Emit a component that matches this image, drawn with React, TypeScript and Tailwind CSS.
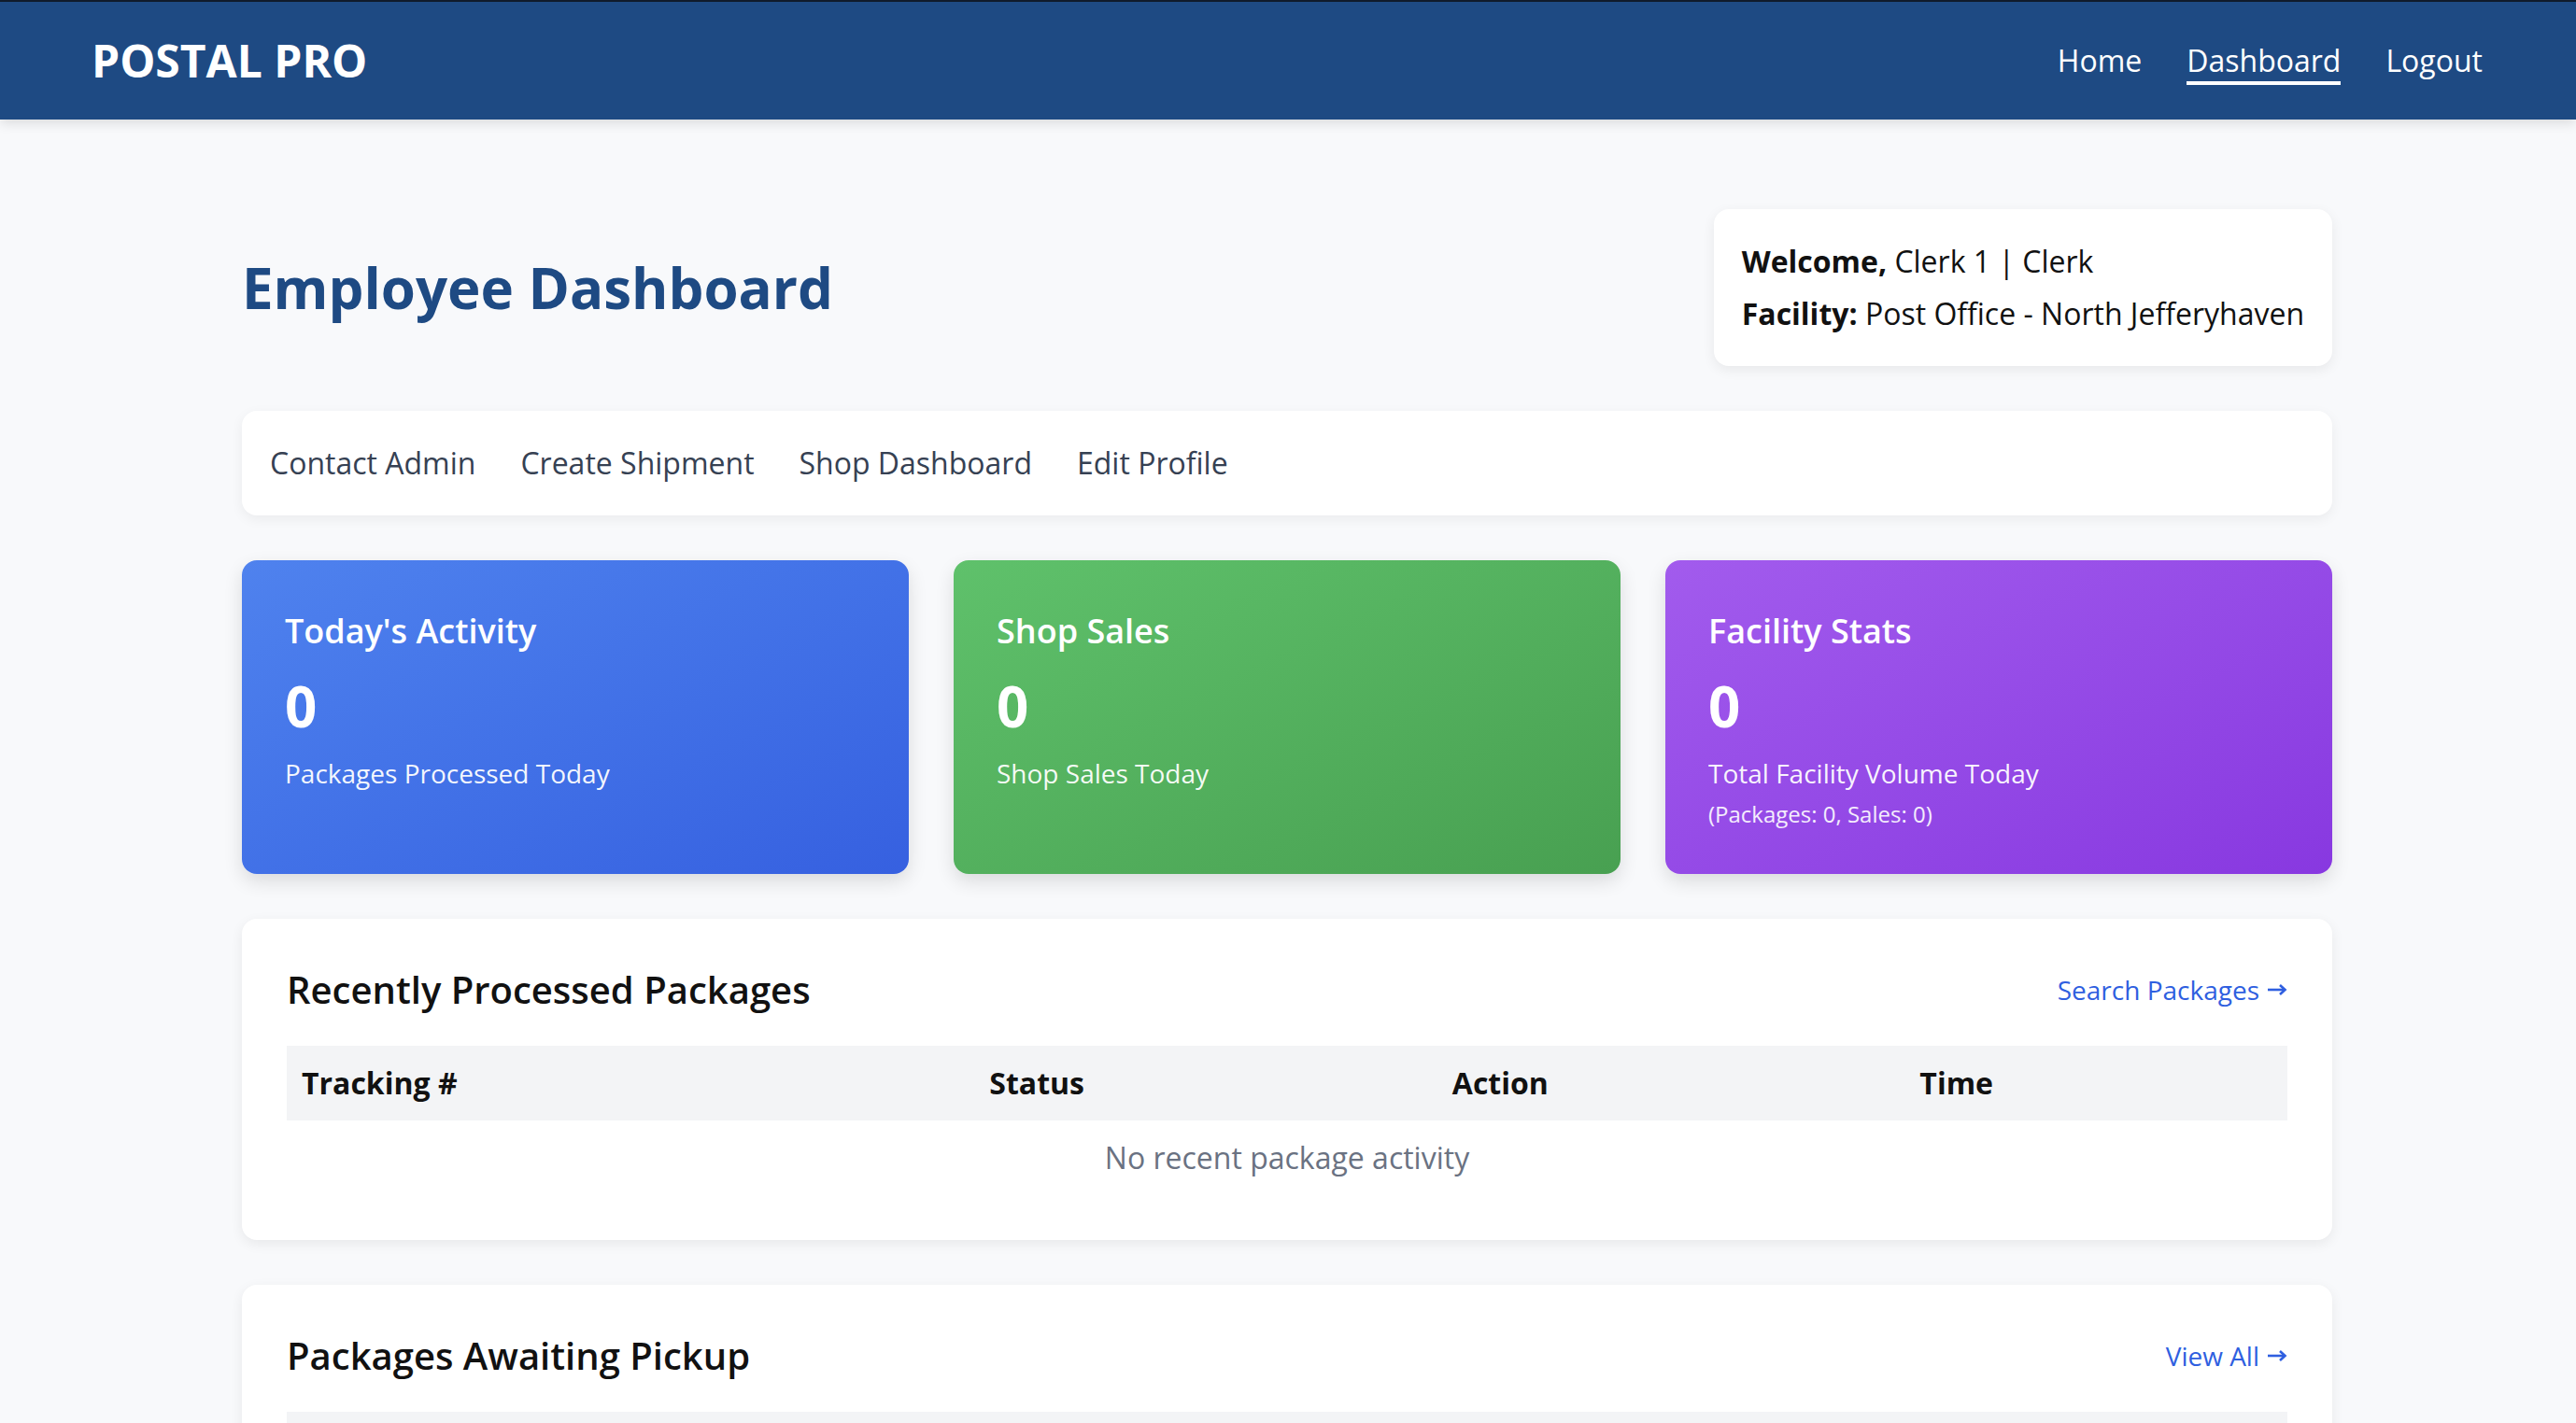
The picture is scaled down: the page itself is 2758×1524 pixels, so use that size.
import React from 'react'

type Stat = {
  title: string
  value: number
  label: string
  note?: string
  bg: string
}

const stats: Stat[] = [
  { title: "Today's Activity", value: 0, label: 'Packages Processed Today', bg: 'bg-gradient-to-br from-[#4f82ee] to-[#3660e0]' },
  { title: 'Shop Sales', value: 0, label: 'Shop Sales Today', bg: 'bg-gradient-to-br from-[#5fc16b] to-[#48a051]' },
  { title: 'Facility Stats', value: 0, label: 'Total Facility Volume Today', note: '(Packages: 0, Sales: 0)', bg: 'bg-gradient-to-br from-[#a25bed] to-[#8838e0]' },
]

const quickLinks = ['Contact Admin', 'Create Shipment', 'Shop Dashboard', 'Edit Profile']

const Navbar: React.FC = () => {
  return (
    <nav className="h-[128px] bg-[#1e4a83] border-t-2 border-[#101b2b] px-[98px] flex items-center justify-between shadow-[0_4px_12px_rgba(0,0,0,0.12)] relative z-10">
      <p className="text-white font-bold text-[48px] leading-[64px]">POSTAL PRO</p>
      <div className="flex items-center gap-12 text-white text-[32px] leading-[48px] pr-[2px]">
        <a href="#">Home</a>
        <a href="#" className="relative after:absolute after:left-0 after:right-0 after:bottom-[-2px] after:h-[4px] after:bg-white">
          Dashboard
        </a>
        <a href="#">Logout</a>
      </div>
    </nav>
  )
}

const PackageTable: React.FC<{ empty: string }> = ({ empty }) => {
  return (
    <table className="w-full mt-8 border-collapse">
      <thead>
        <tr className="bg-[#f3f4f6]">
          <th className="w-[737px] text-left px-4 py-4 text-[32px] leading-[48px] font-bold text-[#111]">Tracking #</th>
          <th className="w-[496px] text-left px-4 py-4 text-[32px] leading-[48px] font-bold text-[#111]">Status</th>
          <th className="w-[501px] text-left px-4 py-4 text-[32px] leading-[48px] font-bold text-[#111]">Action</th>
          <th className="w-[410px] text-left px-4 py-4 text-[32px] leading-[48px] font-bold text-[#111]">Time</th>
        </tr>
      </thead>
      <tbody>
        <tr>
          <td colSpan={4} className="text-center px-4 py-4 text-[32px] leading-[48px] text-gray-500">{empty}</td>
        </tr>
      </tbody>
    </table>
  )
}

const Section: React.FC<{ title: string; link: string; empty: string }> = ({ title, link, empty }) => {
  return (
    <div className="bg-white rounded-2xl p-12 shadow-[0_4px_14px_rgba(0,0,0,0.07)]">
      <div className="flex items-center justify-between">
        <h2 className="text-[40px] leading-[56px] font-semibold text-[#111]">{title}</h2>
        <a href="#" className="flex items-center gap-[8px] text-[28px] leading-[40px] text-[#2f5fe0]">
          {link}
          <svg width="22" height="14" viewBox="0 0 22 14" fill="none" stroke="currentColor" strokeWidth="2.6">
            <path d="M1 7h18" />
            <path d="M14 2l5.5 5L14 12" />
          </svg>
        </a>
      </div>
      <PackageTable empty={empty} />
    </div>
  )
}

const App: React.FC = () => {
  return (
    <div className="min-h-screen bg-[#f8f9fb] font-['Open_Sans','Noto_Sans',sans-serif]">
      <Navbar />
      <main className="w-[2238px] mx-auto pt-[96px] pb-24 -translate-x-[1px]">
        <div className="flex items-center justify-between">
          <h1 className="text-[60px] leading-[72px] font-bold text-[#1e4a83]">Employee Dashboard</h1>
          <div className="bg-white rounded-2xl px-[30px] py-8 shadow-[0_4px_14px_rgba(0,0,0,0.07)] text-[32px] leading-[48px] text-[#111]">
            <p><span className="font-bold">Welcome,</span> Clerk 1 | Clerk</p>
            <p className="mt-2"><span className="font-bold">Facility:</span> Post Office - North Jefferyhaven</p>
          </div>
        </div>

        <div className="mt-12 bg-white rounded-2xl px-[30px] py-8 flex gap-12 text-[32px] leading-[48px] text-gray-700 shadow-[0_4px_14px_rgba(0,0,0,0.06)]">
          {quickLinks.map((l) => (
            <a key={l} href="#">{l}</a>
          ))}
        </div>

        <div className="mt-12 grid grid-cols-3 gap-12">
          {stats.map((s) => (
            <div key={s.title} className={`${s.bg} rounded-2xl px-[46px] py-12 text-white shadow-[0_8px_20px_rgba(0,0,0,0.12)]`}>
              <p className="text-[36px] leading-[56px] font-semibold">{s.title}</p>
              <p className="mt-4 text-[60px] leading-[72px] font-bold">{s.value}</p>
              <p className="mt-4 text-[28px] leading-[40px] text-white/95">{s.label}</p>
              {s.note && <p className="mt-2 text-[24px] leading-[32px] text-white/90">{s.note}</p>}
            </div>
          ))}
        </div>

        <div className="mt-12">
          <Section title="Recently Processed Packages" link="Search Packages" empty="No recent package activity" />
        </div>
        <div className="mt-12">
          <Section title="Packages Awaiting Pickup" link="View All" empty="No packages awaiting pickup" />
        </div>
      </main>
    </div>
  )
}

export default App
